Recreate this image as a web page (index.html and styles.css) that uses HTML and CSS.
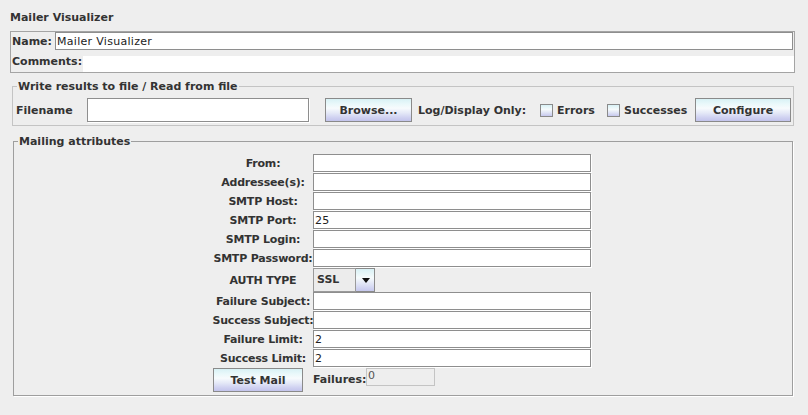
FILE: index.html
```html
<!DOCTYPE html>
<html>
<head>
<meta charset="utf-8">
<link rel="stylesheet" href="styles.css">
</head>
<body>
<div class="title">Mailer Visualizer</div>
<div class="namebox">
  <div class="name-row">
    <span class="lbl name-lbl">Name:</span>
    <input class="tf name-tf" type="text" value="Mailer Visualizer">
  </div>
  <div class="comments-row">
    <span class="lbl comments-lbl">Comments:</span>
    <div class="comments-area"></div>
  </div>
</div>

<fieldset class="fs write">
  <legend>Write results to file / Read from file</legend>
  <div class="write-row">
    <span class="lbl filename-lbl">Filename</span>
    <input class="tf filename-tf" type="text" value="">
    <button class="btn browse">Browse...</button>
    <span class="lbl logonly">Log/Display Only:</span>
    <span class="cb"></span><span class="lbl errors-lbl">Errors</span>
    <span class="cb"></span><span class="lbl succ-lbl">Successes</span>
    <button class="btn configure">Configure</button>
  </div>
</fieldset>

<fieldset class="fs mail">
  <legend>Mailing attributes</legend>
  <div class="grid">
    <span class="glbl">From:</span><input class="tf gtf" type="text" value="">
    <span class="glbl">Addressee(s):</span><input class="tf gtf" type="text" value="">
    <span class="glbl">SMTP Host:</span><input class="tf gtf" type="text" value="">
    <span class="glbl">SMTP Port:</span><input class="tf gtf" type="text" value="25">
    <span class="glbl">SMTP Login:</span><input class="tf gtf" type="text" value="">
    <span class="glbl">SMTP Password:</span><input class="tf gtf" type="text" value="">
    <span class="glbl glbl-tall">AUTH TYPE</span>
    <div class="combo">
      <div class="combo-text">SSL</div>
      <div class="combo-arrow"><span class="tri"></span></div>
    </div>
    <span class="glbl">Failure Subject:</span><input class="tf gtf" type="text" value="">
    <span class="glbl">Success Subject:</span><input class="tf gtf" type="text" value="">
    <span class="glbl">Failure Limit:</span><input class="tf gtf" type="text" value="2">
    <span class="glbl">Success Limit:</span><input class="tf gtf" type="text" value="2">
    <button class="btn testmail">Test Mail</button>
    <div class="failures">
      <span class="lbl failures-lbl">Failures:</span>
      <div class="failures-field">0</div>
    </div>
  </div>
</fieldset>
</body>
</html>
```

FILE: styles.css
```css
html, body {
  margin: 0;
  padding: 0;
  background: #eeeeee;
}
body {
  font-family: "DejaVu Sans", "Liberation Sans", sans-serif;
  font-size: 11px;
  color: #333333;
  width: 808px;
  height: 415px;
  overflow: hidden;
}
.lbl, .glbl, legend, .title {
  font-weight: bold;
  color: #333333;
  white-space: nowrap;
}
.title {
  padding: 11px 10px 0;
  line-height: 14px;
  height: 20px;
}

/* generic controls */
.tf {
  box-sizing: border-box;
  border: 1px solid #8e8e8e;
  box-shadow: 1px 1px 0 #ffffff;
  background: #ffffff;
  font-family: "DejaVu Sans", "Liberation Sans", sans-serif;
  font-size: 11px;
  letter-spacing: 0.3px;
  color: #222222;
  padding: 0 0 0 1px;
  margin: 0;
  outline: none;
  border-radius: 0;
}
.btn {
  box-sizing: border-box;
  height: 24px;
  border: 1px solid #8a8a8a;
  border-radius: 0;
  background: linear-gradient(#d8f1f5 0%, #e9f8fa 22%, #f7fbfd 42%, #e4e8f7 64%, #cfd1f1 85%, #c3c4ec 100%);
  font-family: "DejaVu Sans", "Liberation Sans", sans-serif;
  font-size: 11px;
  font-weight: bold;
  color: #333333;
  padding: 0;
  margin: 0;
}
.cb {
  box-sizing: border-box;
  width: 13px;
  height: 13px;
  border: 1px solid #8a8a8a;
  background: linear-gradient(#d8f1f5 0%, #f6fbfc 40%, #dfe3f5 70%, #c6c8ee 100%);
  margin-right: 4px;
}

/* name box */
.namebox {
  margin: 0 13px 0 10px;
  border: 1px solid #a4a4a4;
  height: 40px;
}
.name-row {
  display: flex;
  align-items: flex-start;
  height: 20px;
}
.name-lbl {
  width: 43px;
  padding-left: 1px;
  line-height: 19px;
}
.name-tf {
  flex: 1;
  height: 18px;
  margin-right: 1px;
  box-shadow: none;
}
.comments-row {
  display: flex;
  align-items: flex-start;
  height: 20px;
}
.comments-lbl {
  width: 71px;
  padding-left: 1px;
  line-height: 20px;
}
.comments-area {
  flex: 1;
  margin-top: 4px;
  height: 16px;
  background: #ffffff;
}

/* fieldsets */
.fs {
  min-width: 0;
}
.fs legend {
  padding: 0 1px;
  margin-left: 4px;
  line-height: 13px;
  font-size: 11px;
}
.write {
  margin: 7px 14px 0 12px;
  padding: 5px 0 3px 0;
  border: 1px solid #c4c4c4;
}
.write-row {
  display: flex;
  align-items: center;
  height: 24px;
  padding-left: 3px;
}
.write-row .filename-lbl { width: 71px; }
.write-row .filename-tf {
  width: 222px;
  height: 24px;
}
.write-row .browse {
  margin-left: 16px;
  width: 87px;
}
.write-row .logonly {
  margin-left: 6px;
  width: 122px;
}
.write-row .errors-lbl { width: 50px; }
.write-row .succ-lbl { width: 71px; }
.write-row .configure { width: 96px; }

/* mailing attributes */
.mail {
  margin: 9px 15px 0 13px;
  padding: 6px 2px 3px 0;
  border: 1px solid #9e9e9e;
  box-shadow: 1px 1px 0 #ffffff;
}
.grid {
  display: grid;
  grid-template-columns: 100px 278px;
  grid-template-rows: repeat(6, 19px) 24px repeat(4, 19px) 24px;
  justify-content: center;
}
.glbl {
  display: flex;
  justify-content: center;
  align-items: center;
  letter-spacing: -0.2px;
  height: 18px;
  align-self: start;
}
.grid .glbl-tall {
  height: 24px;
}
.gtf {
  height: 18px;
  width: 278px;
  align-self: start;
}
.combo {
  display: flex;
  width: 62px;
  height: 24px;
}
.combo-text {
  box-sizing: border-box;
  width: 43px;
  height: 24px;
  border: 1px solid #9a9a9a;
  background: #ececec;
  font-weight: bold;
  line-height: 22px;
  padding-left: 3px;
}
.combo-arrow {
  box-sizing: border-box;
  width: 19px;
  height: 24px;
  border: 1px solid #8a8a8a;
  border-left: none;
  background: linear-gradient(#d8f1f5 0%, #f6fbfc 40%, #dfe3f5 70%, #c6c8ee 100%);
  display: flex;
  align-items: center;
  justify-content: center;
}
.tri {
  width: 0;
  height: 0;
  border-left: 4.5px solid transparent;
  border-right: 4.5px solid transparent;
  border-top: 5px solid #111111;
  margin-left: 1px;
}
.grid .testmail {
  width: 90px;
  justify-self: start;
}
.failures {
  display: flex;
  align-items: flex-start;
}
.failures-lbl {
  width: 53px;
  line-height: 24px;
}
.failures-field {
  box-sizing: border-box;
  width: 69px;
  height: 18px;
  border: 1px solid #c4c4c4;
  background: #eeeeee;
  color: #555555;
  line-height: 14px;
  padding-left: 1px;
}
```
